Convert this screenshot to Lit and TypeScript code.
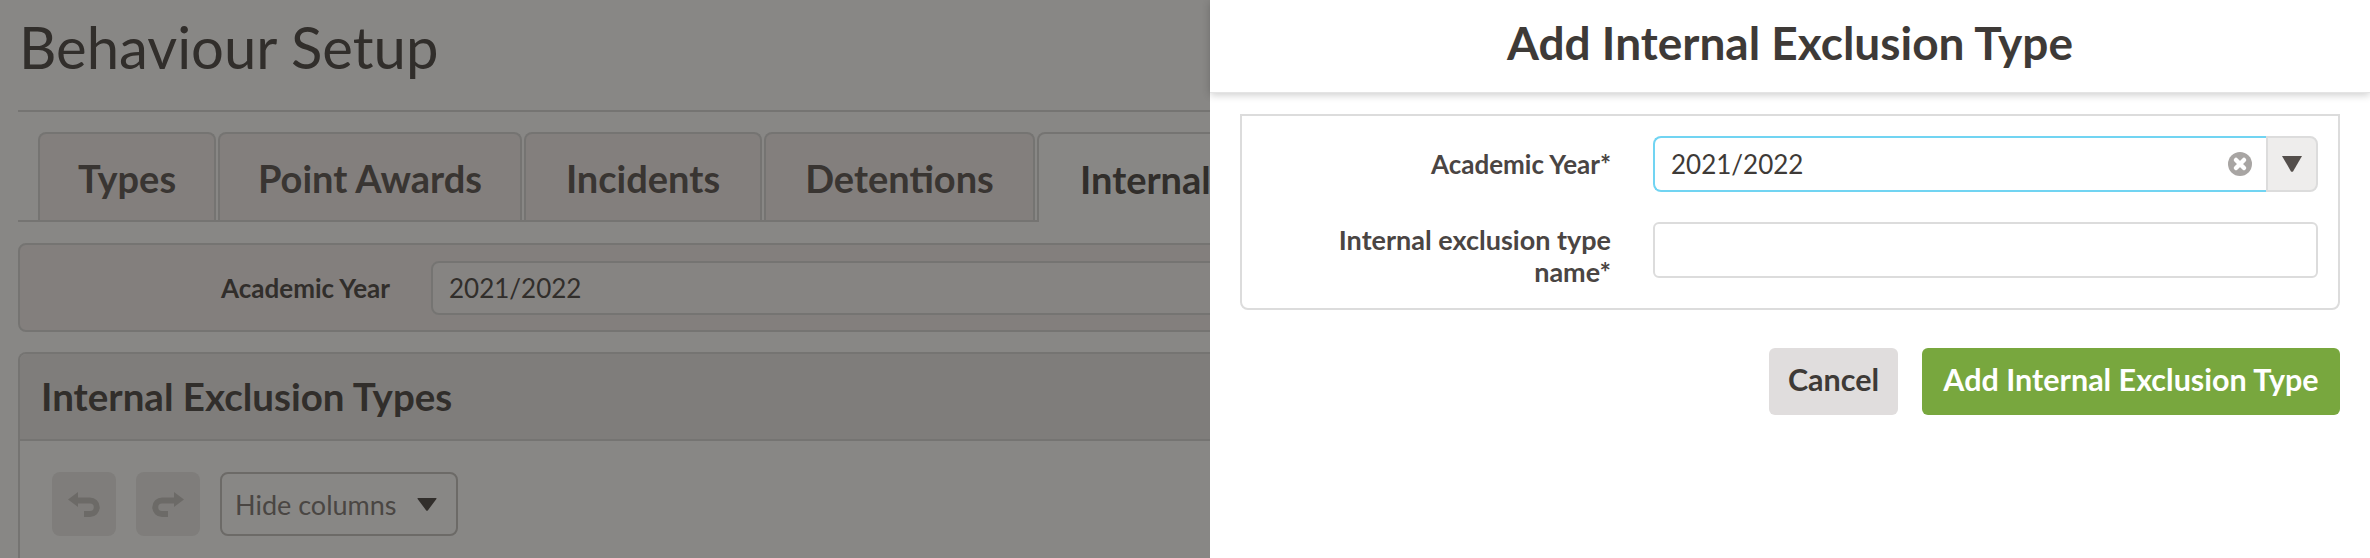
import { LitElement, html, css, svg } from "lit";
import { customElement } from "lit/decorators.js";

@customElement("app-root")
export class AppRoot extends LitElement {
  static styles = css`
    :host { display: block; width: 2370px; height: 558px; overflow: hidden; position: relative; font-family: "Lato", "Open Sans", sans-serif; color: #4a4543; background: #fff; }
    .page { width: 2370px; height: 558px; box-sizing: border-box; padding: 0 20px 0 18px; overflow: hidden; }
    h1 { margin: 0; height: 112px; box-sizing: border-box; padding: 15px 0 0 1px; font-size: 58px; line-height: 64px; font-weight: 400; border-bottom: 2px solid #d8d8d8; color: #4a4543; }
    .tabs { display: flex; margin-top: 20px; padding-left: 20px; border-bottom: 2px solid #d8d8d8; height: 90px; box-sizing: border-box; }
    .tab { height: 88px; box-sizing: border-box; border: 2px solid #d8d8d8; border-bottom: 0; border-radius: 8px 8px 0 0; background: #f4eeee; font-size: 38px; font-weight: 700; display: flex; align-items: center; justify-content: center; margin-right: 2px; padding-top: 1px; color: #5a5553; white-space: nowrap; }
    .tab.active { background: #fff; height: 90px; color: #4a4543; justify-content: flex-start; padding-left: 41px; }
    .yearbar { margin-top: 21px; height: 89px; box-sizing: border-box; border: 2px solid #d8d8d8; border-radius: 8px; background: #f4eeee; display: flex; align-items: center; }
    .yearbar label { width: 370px; text-align: right; font-size: 26px; font-weight: 700; }
    .yearinput { margin-left: 41px; flex: 1; height: 54px; box-sizing: border-box; border: 2px solid #d8d8d8; border-radius: 8px; background: #fbf8f8; padding: 0 16px; display: flex; align-items: center; font-size: 26px; }
    .grid { margin-top: 20px; border: 2px solid #d8d8d8; border-bottom: 0; border-radius: 8px 8px 0 0; height: 220px; }
    .gridhead { height: 87px; box-sizing: border-box; border-bottom: 2px solid #d8d8d8; background: #ecebeb; font-size: 38.5px; font-weight: 700; padding: 0 21px 2px; display: flex; align-items: center; border-radius: 6px 6px 0 0; }
    .tools { display: flex; gap: 20px; padding: 31px 32px; }
    .tool { width: 64px; height: 64px; border-radius: 8px; background: #ecebea; display: flex; align-items: center; justify-content: center; }
    .hide { width: 238px; height: 64px; box-sizing: border-box; border: 2px solid #c4c2c0; border-radius: 8px; display: flex; align-items: center; padding: 0 19px 0 13px; font-size: 27px; color: #7d7775; justify-content: space-between; white-space: nowrap; }
    .overlay { position: absolute; inset: 0; background: rgba(26, 25, 22, 0.52); }
    .panel { position: absolute; left: 1210px; top: 0; right: 0; bottom: 0; background: #fff; }
    .phead { height: 93px; display: flex; align-items: center; justify-content: center; font-size: 46px; font-weight: 700; color: #3e3a37; box-shadow: 0 2px 8px rgba(0,0,0,.2); border-bottom: 1px solid #e4e4e4; box-sizing: border-box; padding-bottom: 8px; }
    .form { margin: 21px 30px 0 30px; height: 196px; box-sizing: border-box; border: 2px solid #dcdcdc; border-radius: 0 0 8px 8px; padding: 20px 20px 0 0; display: flex; flex-direction: column; gap: 30px; }
    .row { display: grid; grid-template-columns: 369px 1fr; column-gap: 42px; }
    .row label { text-align: right; font-size: 26px; font-weight: 700; line-height: 32px; color: #4a4543; align-self: center; padding-left: 30px; }
    .row label.long { font-size: 27px; padding-top: 2px; }
    .select { display: flex; height: 56px; }
    .sel { flex: 1; box-sizing: border-box; border: 2px solid #71d4f2; border-right: 0; border-radius: 8px 0 0 8px; display: flex; align-items: center; justify-content: space-between; padding: 0 14px 0 16px; font-size: 26px; color: #3e3a37; }
    .arrow { width: 52px; box-sizing: border-box; border: 2px solid #dcdcdc; border-radius: 0 8px 8px 0; background: #eeedec; display: flex; align-items: center; justify-content: center; }
    .text { height: 56px; box-sizing: border-box; border: 2px solid #dcdcdc; border-radius: 6px; }
    .actions { display: flex; justify-content: flex-end; gap: 24px; margin: 38px 30px 0 0; }
    .btn { height: 67px; box-sizing: border-box; padding-bottom: 5px; border-radius: 6px; display: flex; align-items: center; justify-content: center; font-size: 30.5px; font-weight: 700; white-space: nowrap; }
    .cancel { width: 129px; background: #e0dddd; color: #3e3a37; }
    .add { width: 418px; background: #78a73e; color: #fff; }
  `;

  private undo(flip = false) {
    return svg`<svg width="32" height="25" viewBox="0 0 32 25" style=${flip ? "transform:scaleX(-1)" : ""}><path d="M0 7.5 L10 0 V15 Z" fill="#c5c2c0"/><path d="M8 8.5 H22 A6.75 6.75 0 0 1 22 22 H16" fill="none" stroke="#c5c2c0" stroke-width="6"/></svg>`;
  }

  render() {
    const tabs: [string, number][] = [["Types", 178], ["Point Awards", 304], ["Incidents", 238], ["Detentions", 271], ["Internal Exclusions", 400]];
    return html`
      <div class="page">
        <h1>Behaviour Setup</h1>
        <div class="tabs">
          ${tabs.map(([t, w], i) => html`<div class="tab ${i === 4 ? "active" : ""}" style="width:${w}px">${t}</div>`)}
        </div>
        <div class="yearbar"><label>Academic Year</label><div class="yearinput">2021/2022</div></div>
        <div class="grid">
          <div class="gridhead">Internal Exclusion Types</div>
          <div class="tools">
            <div class="tool">${this.undo()}</div>
            <div class="tool">${this.undo(true)}</div>
            <div class="hide"><span>Hide columns</span><svg width="20" height="13" viewBox="0 0 20 13"><path d="M1 0H19Q20 0 19.4 1L10.8 12.4Q10 13 9.2 12.4L.6 1Q0 0 1 0Z" fill="#4a4543"/></svg></div>
          </div>
        </div>
      </div>
      <div class="overlay"></div>
      <div class="panel">
        <div class="phead">Add Internal Exclusion Type</div>
        <div class="form">
          <div class="row">
            <label>Academic Year*</label>
            <div class="select">
              <div class="sel"><span>2021/2022</span>
                <svg width="24" height="24" viewBox="0 0 24 24"><circle cx="12" cy="12" r="12" fill="#a8a5a3"/><path d="M8 8 L16 16 M16 8 L8 16" stroke="#fff" stroke-width="4.5" stroke-linecap="round"/></svg>
              </div>
              <div class="arrow"><svg width="20" height="16" viewBox="0 0 20 16"><path d="M0 0H20L11 15.4Q10 16 9 15.4Z" fill="#544f4c"/></svg></div>
            </div>
          </div>
          <div class="row">
            <label class="long">Internal exclusion type name*</label>
            <div class="text"></div>
          </div>
        </div>
        <div class="actions">
          <div class="btn cancel">Cancel</div>
          <div class="btn add">Add Internal Exclusion Type</div>
        </div>
      </div>
    `;
  }
}
